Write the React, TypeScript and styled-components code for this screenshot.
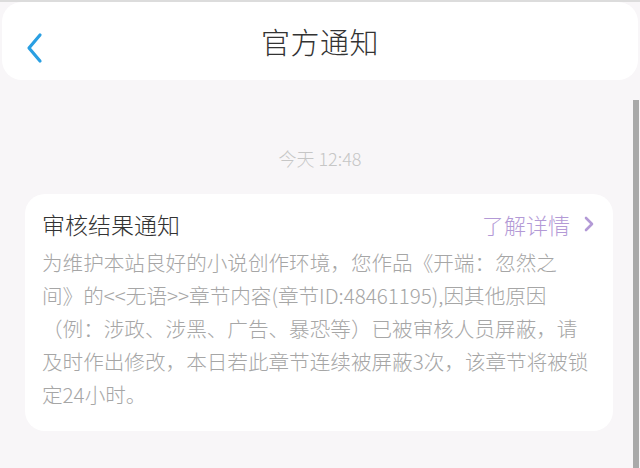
import React from 'react';
import styled, { createGlobalStyle } from 'styled-components';

const GlobalStyle = createGlobalStyle`
  html, body {
    margin: 0;
    padding: 0;
    background: #f8f6f8;
    font-family: "Noto Sans CJK SC", "Noto Sans", sans-serif;
    font-weight: 300;
  }
`;

const Page = styled.div`
  position: relative;
  width: 640px;
  height: 468px;
  overflow: hidden;
  background: #f8f6f8;
  border-top: 2px solid #dcdcdc;
  box-sizing: border-box;
`;

const Header = styled.div`
  height: 78px;
  margin: 0 2px;
  background: #ffffff;
  border-radius: 20px;
  display: flex;
  align-items: center;
  justify-content: center;
  position: relative;
`;

const BackButton = styled.div`
  position: absolute;
  left: 22px;
  top: 30px;
  width: 20px;
  height: 32px;
`;

const Title = styled.div`
  font-size: 29px;
  color: #333333;
  letter-spacing: 0.5px;
`;

const Scrollbar = styled.div`
  position: absolute;
  right: 1px;
  top: 98px;
  width: 6px;
  bottom: 0;
  background: #a9a9a9;
`;

const Content = styled.div`
  padding: 63px 25px 0 25px;
  display: flex;
  flex-direction: column;
  align-items: center;
`;

const Time = styled.div`
  font-size: 18px;
  color: #c6c6c6;
  height: 30px;
  line-height: 30px;
  margin-bottom: 21px;
`;

const Card = styled.div`
  width: 588px;
  align-self: flex-start;
  box-sizing: border-box;
  background: #ffffff;
  border-radius: 20px;
  padding: 12px 17px 20px 17px;
`;

const CardHead = styled.div`
  display: flex;
  align-items: center;
  justify-content: space-between;
  height: 36px;
  margin-bottom: 4px;
`;

const CardTitle = styled.div`
  font-size: 23px;
  color: #333333;
`;

const More = styled.div`
  display: flex;
  align-items: center;
  gap: 14px;
  padding-right: 2px;
  font-size: 22px;
  color: #b39ad6;
`;

const Body = styled.div`
  font-size: 20.6px;
  line-height: 33px;
  color: #a6a6a6;
`;

const Line = styled.div`
  white-space: nowrap;
`;

const lines = [
  '为维护本站良好的小说创作环境，您作品《开端：忽然之',
  '间》的<<无语>>章节内容(章节ID:48461195),因其他原因',
  '（例：涉政、涉黑、广告、暴恐等）已被审核人员屏蔽，请',
  '及时作出修改，本日若此章节连续被屏蔽3次，该章节将被锁',
  '定24小时。',
];

const App = () => {
  return (
    <>
      <GlobalStyle />
      <Page>
        <Header>
          <BackButton>
            <svg width="20" height="32" viewBox="0 0 20 32">
              <path d="M16 3 L5 16 L16 29" fill="none" stroke="#2a9fe2" strokeWidth="3.2" strokeLinecap="round" strokeLinejoin="round" />
            </svg>
          </BackButton>
          <Title>官方通知</Title>
        </Header>
        <Scrollbar />
        <Content>
          <Time>今天 12:48</Time>
          <Card>
            <CardHead>
              <CardTitle>审核结果通知</CardTitle>
              <More>
                了解详情
                <svg width="10" height="16" viewBox="0 0 10 16">
                  <path d="M2 2 L8 8 L2 14" fill="none" stroke="#b39ad6" strokeWidth="2.6" strokeLinecap="round" strokeLinejoin="round" />
                </svg>
              </More>
            </CardHead>
            <Body>
              {lines.map((l) => (
                <Line key={l}>{l}</Line>
              ))}
            </Body>
          </Card>
        </Content>
      </Page>
    </>
  );
};

export default App;
